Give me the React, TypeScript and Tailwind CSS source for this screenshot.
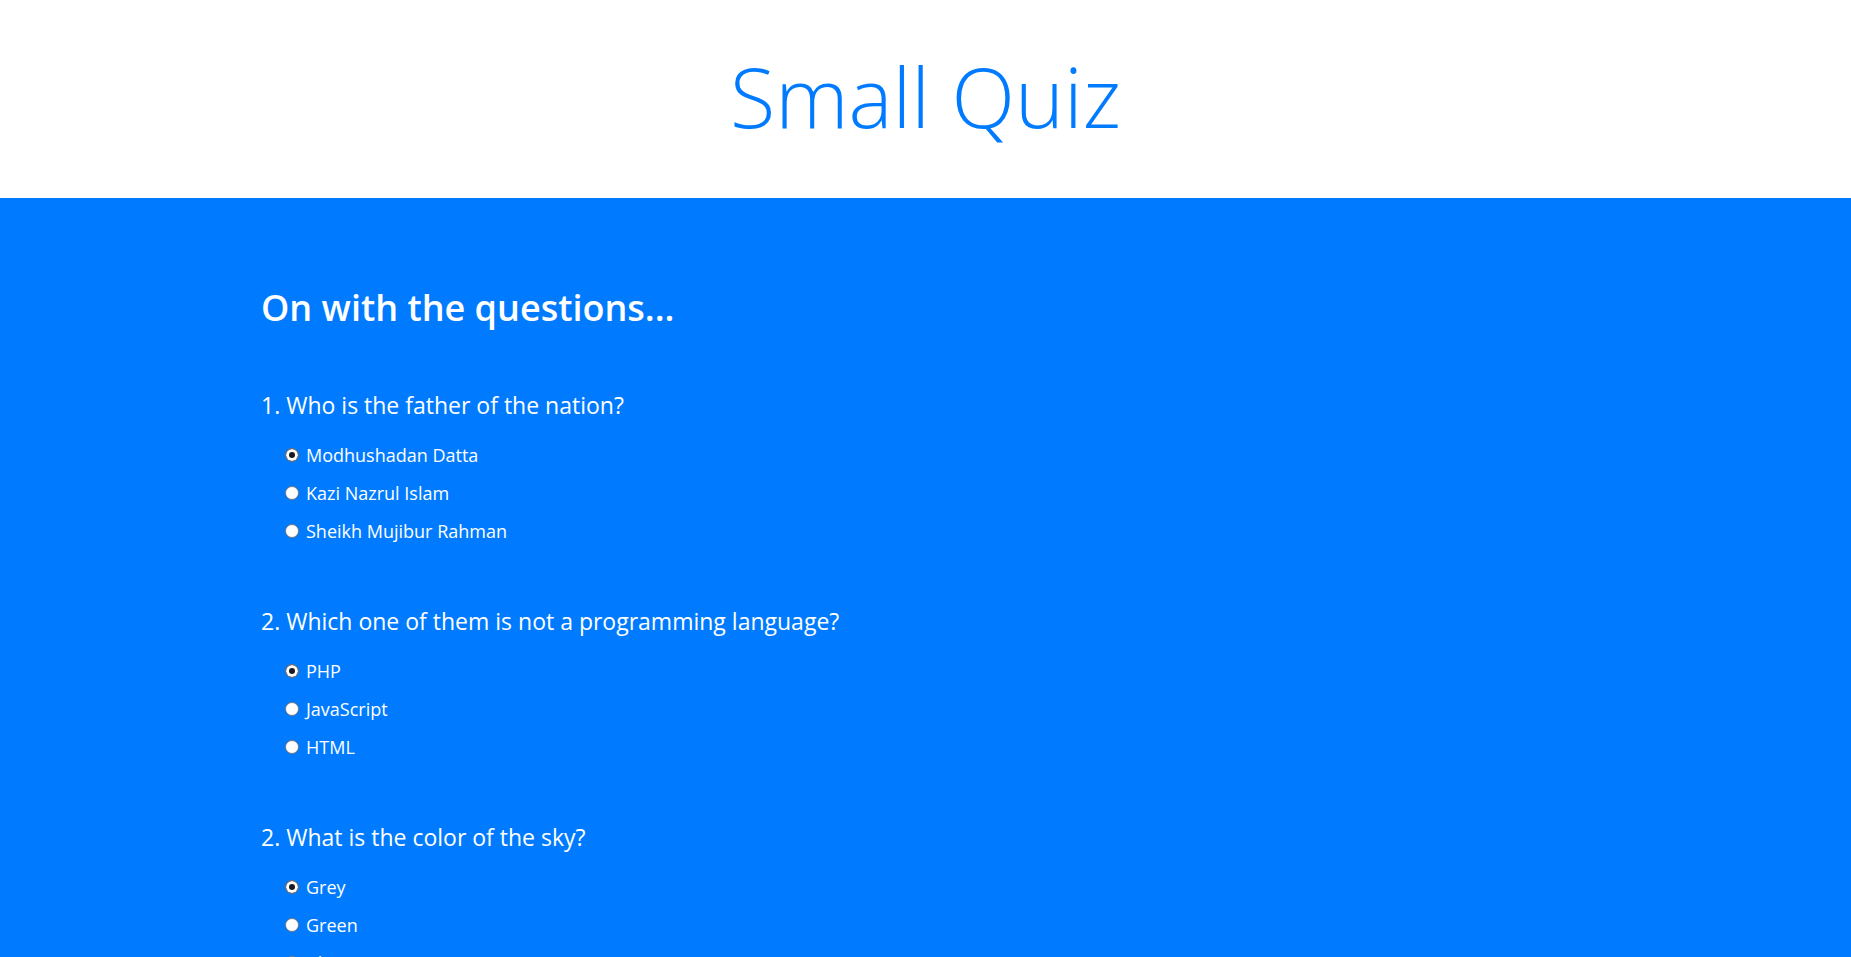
import React from "react";

const questions = [
  {
    title: "1. Who is the father of the nation?",
    name: "q1",
    options: ["Modhushadan Datta", "Kazi Nazrul Islam", "Sheikh Mujibur Rahman"],
  },
  {
    title: "2. Which one of them is not a programming language?",
    name: "q2",
    options: ["PHP", "JavaScript", "HTML"],
  },
  {
    title: "2. What is the color of the sky?",
    name: "q3",
    options: ["Grey", "Green", "Blue"],
  },
];

const Question = ({ q }: { q: (typeof questions)[number] }) => (
  <div className="flex flex-col mt-[54px] [&+&]:mt-[52px]">
    <h4 className="h-[38px] flex items-center text-[23px]">{q.title}</h4>
    <div className="flex flex-col mt-3 pl-6">
      {q.options.map((opt, i) => (
        <label key={opt} className="h-[38px] flex items-center gap-[7px] text-[18px]">
          <input
            type="radio"
            name={q.name}
            defaultChecked={i === 0}
            className="appearance-none size-[14px] rounded-full border border-[#767676] bg-white checked:bg-[#1a1a1a] checked:shadow-[inset_0_0_0_3px_#fff]"
          />
          {opt}
        </label>
      ))}
    </div>
  </div>
);

export default function App() {
  return (
    <div className="min-h-screen font-['Open_Sans',sans-serif] bg-[#007bff]">
      <header className="h-[198px] bg-white flex items-center justify-center">
        <h1 className="text-[#007bff] text-[83px] font-light leading-none pb-2">Small Quiz</h1>
      </header>
      <main className="w-[1329px] mx-auto text-white pt-[86px] pb-20">
        <h2 className="h-[48px] flex items-center text-[36px] font-semibold">On with the questions...</h2>
        {questions.map((q) => (
          <Question key={q.name} q={q} />
        ))}
      </main>
    </div>
  );
}
